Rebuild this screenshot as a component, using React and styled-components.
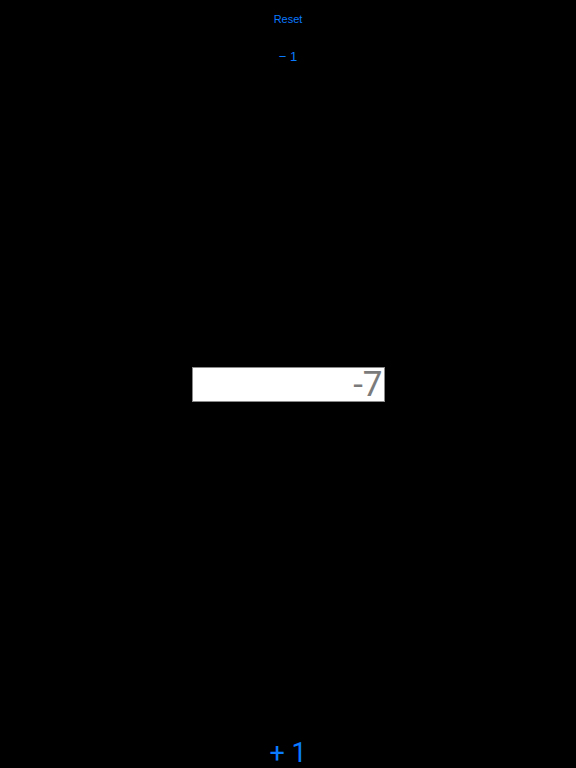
import React, { useState } from "react";
import styled, { createGlobalStyle } from "styled-components";

const Global = createGlobalStyle`
  html, body {
    margin: 0;
    padding: 0;
    background: #000;
  }
  #root {
    height: 100vh;
  }
`;

const Page = styled.div`
  height: 768px;
  width: 100%;
  background: #000;
  display: grid;
  grid-template-rows: 1fr auto 1fr;
  justify-items: center;
  overflow: hidden;
`;

const Top = styled.div`
  align-self: start;
  display: flex;
  flex-direction: column;
  align-items: center;
  padding-top: 12px;
`;

const Bottom = styled.div`
  align-self: end;
  display: flex;
  justify-content: center;
`;

const LinkButton = styled.button`
  background: none;
  border: none;
  padding: 0;
  margin: 0;
  color: #0a7aff;
  font-family: ${(p) => (p.big ? "Roboto, sans-serif" : '"Liberation Sans", Arial, sans-serif')};
  font-size: ${(p) => p.size}px;
  line-height: ${(p) => p.lh}px;
  margin-top: ${(p) => p.mt || 0}px;
  font-weight: 400;
  white-space: pre;
  cursor: pointer;
`;

const Field = styled.div`
  width: 193px;
  height: 35px;
  box-sizing: border-box;
  background: #fff;
  border: 1px solid #8a8a8a;
  display: flex;
  align-items: center;
  justify-content: flex-end;
  padding-right: 1px;
  color: #7b7b7b;
  font-family: Roboto, "Liberation Sans", sans-serif;
  font-weight: 400;
  font-size: 35px;
  line-height: 35px;
`;

export default function App() {
  const [count, setCount] = useState(-7);
  return (
    <>
      <Global />
      <Page>
        <Top>
          <LinkButton size={11} lh={14} onClick={() => setCount(0)}>
            Reset
          </LinkButton>
          <LinkButton size={13} lh={16} mt={23} onClick={() => setCount(count - 1)}>
            {"\u2212 1"}
          </LinkButton>
        </Top>
        <Field>{count}</Field>
        <Bottom>
          <LinkButton big size={27} lh={30} onClick={() => setCount(count + 1)}>
            + 1
          </LinkButton>
        </Bottom>
      </Page>
    </>
  );
}
